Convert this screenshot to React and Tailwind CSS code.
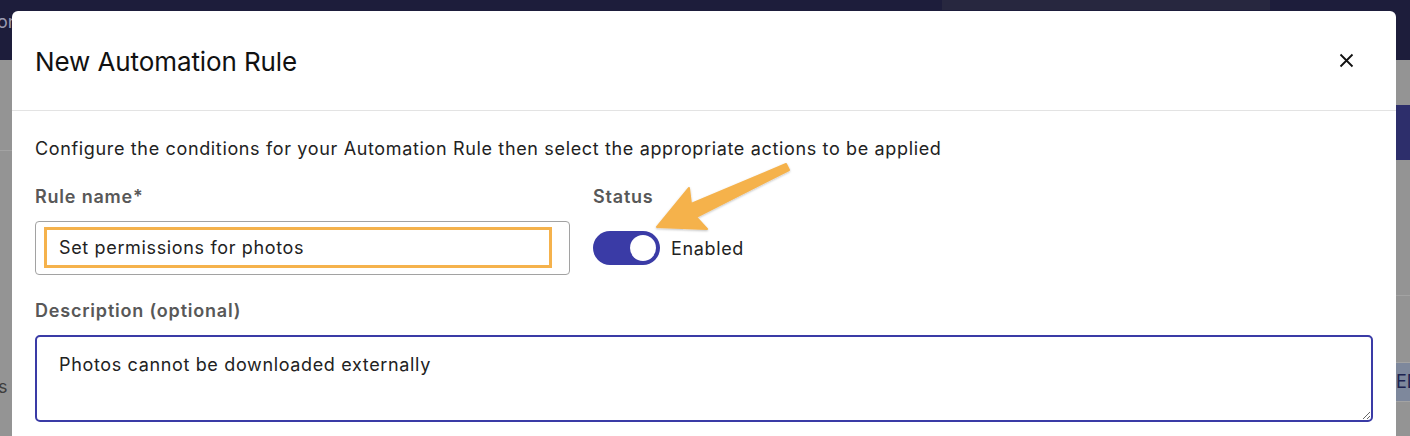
import React from "react";

const Arrow = () => (
  <svg className="absolute left-0 top-0 pointer-events-none" width="1410" height="436">
    <defs>
      <filter id="sh" x="-20%" y="-20%" width="140%" height="140%">
        <feDropShadow dx="0" dy="1" stdDeviation="1" floodColor="#000" floodOpacity="0.25" />
      </filter>
    </defs>
    <polygon
      points="657,227 689,188 691,204 786,164 789,170 696,217 707,229"
      fill="#f5b24c"
      strokeLinejoin="round"
      stroke="#f5b24c"
      strokeWidth="2"
      filter="url(#sh)"
    />
  </svg>
);

export default function App() {
  return (
    <div className="relative w-[1410px] h-[436px] overflow-hidden bg-[#949494]" style={{ fontFamily: "Inter, 'Noto Sans', sans-serif" }}>
      {/* page behind the modal */}
      <div className="h-[60px] bg-[#1d1d3b] flex">
        <div className="flex-1 text-[#9a9ab0] text-[18px] pt-[8px] -ml-[3px]">on</div>
        <div className="w-[328px] h-[10px] bg-[#27273f] mr-[140px]"></div>
      </div>
      <div className="flex justify-between">
        <div className="w-[12px]">
          <div className="h-[90px]"></div>
          <div className="h-px bg-[#a3a3a3]"></div>
          <div className="mt-[222px] text-[18px] text-[#3e3e3e] -ml-[2px]">s</div>
        </div>
        <div className="w-[14px]">
          <div className="mt-[45px] h-[55px] bg-[#2d2e6b]"></div>
          <div className="mt-[135px] h-px bg-[#a3a3a3]"></div>
          <div className="mt-[66px] h-px bg-[#a3a3a3]"></div>
          <div className="h-[38px] bg-[#7e889c] text-[#1d2350] text-[18px] leading-[38px]">ED</div>
          <div className="h-px bg-[#a3a3a3]"></div>
        </div>
      </div>

      {/* modal */}
      <div className="absolute left-[12px] top-[11px] w-[1384px] h-[460px] bg-white rounded-[6px]">
        <div className="h-[100px] px-[23px] flex items-center justify-between border-b border-[#e3e3e3]">
          <h2 className="text-[26px] text-[#111] pt-[2px] tracking-[-0.1px]">New Automation Rule</h2>
          <button className="w-[30px] h-[30px] flex items-center justify-center mr-[12px]">
            <svg width="15" height="15" viewBox="0 0 15 15">
              <path d="M1.5 1.5L13.5 13.5M13.5 1.5L1.5 13.5" stroke="#111" strokeWidth="1.8" />
            </svg>
          </button>
        </div>

        <div className="px-[23px] pt-[26px] tracking-[0.65px]">
          <p className="text-[18px] leading-[24px] text-[#222]">
            Configure the conditions for your Automation Rule then select the appropriate actions to be applied
          </p>

          <div className="flex gap-[23px] mt-[24px]">
            <div className="w-[535px]">
              <label className="block text-[18px] leading-[24px] font-semibold text-[#585858] tracking-[0.8px]">Rule name*</label>
              <div className="mt-[12px] h-[54px] border border-[#a2a2a2] rounded-[4px] pl-[8px] pr-[17px] pt-[5px]">
                <div className="h-[41px] border-[3px] border-[#f5b24c] pl-[12px] flex items-center text-[18px] text-[#222]">
                  Set permissions for photos
                </div>
              </div>
            </div>
            <div>
              <label className="block text-[18px] leading-[24px] font-semibold text-[#585858] tracking-[0.8px]">Status</label>
              <div className="mt-[12px] h-[54px] flex items-center gap-[11px]">
                <div className="w-[67px] h-[34px] rounded-full bg-[#3a3ba6] flex items-center justify-end pr-[4px]">
                  <div className="w-[26px] h-[26px] rounded-full bg-white"></div>
                </div>
                <span className="text-[18px] text-[#222]">Enabled</span>
              </div>
            </div>
          </div>

          <label className="block mt-[24px] text-[18px] leading-[24px] font-semibold text-[#585858] tracking-[0.8px]">Description (optional)</label>
          <textarea
            readOnly
            defaultValue="Photos cannot be downloaded externally"
            className="block mt-[12px] w-full h-[87px] border-2 border-[#3a3ba6] rounded-[5px] px-[22px] pt-[16px] text-[18px] leading-[24px] text-[#222] tracking-[0.65px] outline-none"
          />
        </div>
      </div>

      <Arrow />
    </div>
  );
}
